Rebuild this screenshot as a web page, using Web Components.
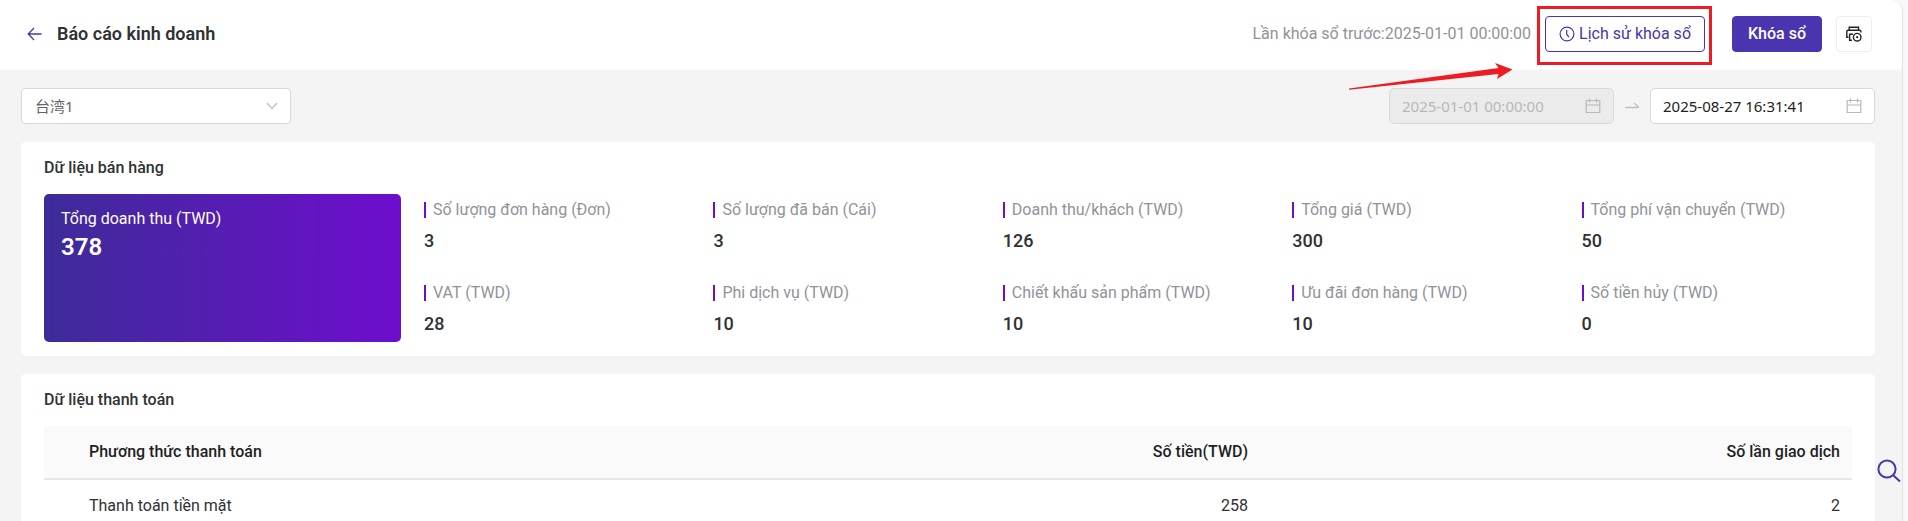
<!DOCTYPE html>
<html lang="vi">
<head>
<meta charset="utf-8">
<title>Báo cáo kinh doanh</title>
<style>
  html, body { height: 100%; }
  body { margin: 0; background: #f5f5f5; font: 16px/24px Roboto, "Noto Sans CJK SC", sans-serif; color: #303133; overflow: hidden; }
</style>
</head>
<body>
<report-page>
  <report-header slot="header" heading="Báo cáo kinh doanh" note="Lần khóa sổ trước:2025-01-01 00:00:00"></report-header>
  <report-filters slot="filters"></report-filters>
  <report-card heading="Dữ liệu bán hàng">
    <sales-summary>
      <total-tile slot="total" label="Tổng doanh thu (TWD)" value="378"></total-tile>
      <stat-item label="Số lượng đơn hàng (Đơn)" value="3"></stat-item>
      <stat-item label="Số lượng đã bán (Cái)" value="3"></stat-item>
      <stat-item label="Doanh thu/khách (TWD)" value="126"></stat-item>
      <stat-item label="Tổng giá (TWD)" value="300"></stat-item>
      <stat-item label="Tổng phí vận chuyển (TWD)" value="50"></stat-item>
      <stat-item label="VAT (TWD)" value="28"></stat-item>
      <stat-item label="Phi dịch vụ (TWD)" value="10"></stat-item>
      <stat-item label="Chiết khấu sản phẩm (TWD)" value="10"></stat-item>
      <stat-item label="Ưu đãi đơn hàng (TWD)" value="10"></stat-item>
      <stat-item label="Số tiền hủy (TWD)" value="0"></stat-item>
    </sales-summary>
  </report-card>
  <report-card heading="Dữ liệu thanh toán">
    <payment-table></payment-table>
  </report-card>
</report-page>

<script>
  const define = (name, render) => customElements.define(name, class extends HTMLElement {
    connectedCallback() {
      if (this.shadowRoot) return;
      this.attachShadow({ mode: 'open' });
      const template = document.createElement('template');
      template.innerHTML = render(this);
      this.shadowRoot.append(template.content.cloneNode(true));
    }
  });
  const attr = (el, name) => el.getAttribute(name) || '';

  define('report-page', () => `
    <style>
      :host { display: block; position: relative; height: 100vh; box-sizing: border-box; padding-right: 5px; background: #f8f8f8; }
      .shell { height: 100%; box-sizing: border-box; overflow: hidden; background: #f4f4f4; border-right: 1px solid #e2e2e2; border-radius: 0 12px 0 0; }
      main { display: flex; flex-direction: column; gap: 18px; padding: 18px 27px 18px 21px; }
      .search { position: absolute; right: 7px; bottom: 38px; padding: 0; border: 0; background: none; color: #4b34b0; line-height: 0; }
    </style>
    <div class="shell">
      <slot name="header"></slot>
      <main><slot name="filters"></slot><slot></slot></main>
    </div>
    <button class="search" aria-label="Tìm kiếm">
      <svg width="24" height="24" viewBox="0 0 24 24" fill="none" stroke="currentColor" stroke-width="2"><circle cx="10" cy="10" r="8.6"/><path d="M16 16l7 6.600"/></svg>
    </button>`);

  define('report-header', el => `
    <style>
      :host { display: block; background: #fff; border-radius: 0 0 4px 0; }
      header { display: flex; align-items: center; padding: 16px 30px 18px 27px; }
      .back { display: block; line-height: 0; color: #4b34b0; margin-right: 15px; }
      h1 { margin: 0; font-size: 18px; line-height: 24px; font-weight: 600; flex: 1; }
      .note { color: #909399; margin-right: 14px; }
      annotated-box { margin-right: 27px; }
      action-button + action-button { margin-left: 14px; }
    </style>
    <header>
      <a class="back" href="#" aria-label="Quay lại"><svg width="15" height="14" viewBox="0 0 15 14" fill="none" stroke="currentColor" stroke-width="1.300"><path d="M14.500 7H1.500M7 1L1.200 7L7 13"/></svg></a>
      <h1>${attr(el, 'heading')}</h1>
      <span class="note">${attr(el, 'note')}</span>
      <annotated-box>
        <action-button kind="outline"><svg width="16" height="16" viewBox="0 0 16 16" fill="none" stroke="currentColor" stroke-width="1.200"><circle cx="8" cy="8" r="6.900"/><path d="M7.700 4v4.400l2.300 2.600"/></svg>Lịch sử khóa sổ</action-button>
      </annotated-box>
      <action-button kind="primary">Khóa sổ</action-button>
      <action-button kind="icon" label="In"><svg width="18" height="18" viewBox="0 0 18 18" fill="none" stroke="#222" stroke-width="1.400"><path d="M4.200 5V2.200h9.300V5M3.400 12.200H1.800V6.500Q1.800 5.200 3.200 5.200H14.500Q15.900 5.200 15.900 6.500V7.500M8 9.200H4.600V15.200H7"/><circle cx="12.200" cy="12.200" r="3.800"/><circle cx="12.200" cy="12.200" r="1.100" fill="#222" stroke="none"/></svg></action-button>
    </header>`);

  define('annotated-box', () => `
    <style>
      :host { display: block; position: relative; }
      .frame { position: absolute; inset: -10px -7px -13px -8px; border: 3px solid #ed1c24; pointer-events: none; }
      svg { position: absolute; left: -196px; top: 46px; z-index: 1; pointer-events: none; }
    </style>
    <slot></slot><div class="frame"></div>
    <svg width="164" height="30" viewBox="0 0 164 30" fill="#ed1c24"><path d="M0 26.500L149.500 6L146 1L163.500 7.500L148 17L149.500 12L0 27.800Z"/></svg>`);

  define('action-button', el => `
    <style>
      :host { display: block; }
      button { display: flex; align-items: center; gap: 4px; height: 36px; box-sizing: border-box; border: 1px solid #4b34b0; border-radius: 4px; padding: 0 13px; font: inherit; white-space: nowrap; }
      .outline { background: #fff; color: #4b34b0; }
      .primary { background: #4b34b0; color: #fff; padding: 0 15px; font-weight: 500; }
      .icon { background: #fff; border-color: #eee; padding: 0 8px; }
    </style>
    <button class="${attr(el, 'kind')}" ${el.hasAttribute('label') ? `aria-label="${attr(el, 'label')}"` : ''}><slot></slot></button>`);

  define('report-filters', () => `
    <style>
      :host { display: flex; align-items: center; justify-content: space-between; }
      .store { position: relative; width: 270px; }
      select { appearance: none; width: 100%; height: 36px; box-sizing: border-box; border: 1px solid #d9d9d9; border-radius: 4px; background: #fff; padding: 0 13px; font: 15px/24px "Noto Sans", "Noto Sans CJK SC", sans-serif; color: #606266; }
      .store svg { position: absolute; right: 13px; top: 14px; pointer-events: none; }
      .range { display: flex; align-items: center; }
      .range > svg { margin: 0 11px; }
    </style>
    <div class="store">
      <select aria-label="Cửa hàng"><option>台湾1</option></select>
      <svg width="12" height="8" viewBox="0 0 12 8" fill="none" stroke="#bfbfbf" stroke-width="1.200"><path d="M1 1l5 5.500L11 1"/></svg>
    </div>
    <div class="range">
      <date-field label="Từ" value="2025-01-01 00:00:00" disabled></date-field>
      <svg width="14" height="10" viewBox="0 0 14 10" fill="none" stroke="#bfbfbf" stroke-width="1.300"><path d="M0 6.500H14L9 2"/></svg>
      <date-field label="Đến" value="2025-08-27 16:31:41"></date-field>
    </div>`);

  define('date-field', el => `
    <style>
      :host { display: block; position: relative; width: 225px; }
      input { width: 100%; height: 36px; box-sizing: border-box; border: 1px solid #d9d9d9; border-radius: 5px; background: #fff; padding: 0 40px 0 12px; font: 15px/24px "Noto Sans", sans-serif; color: #222; }
      input:disabled { background: #ebebeb; color: #b8b8b8; }
      svg { position: absolute; right: 13px; top: 10px; pointer-events: none; }
    </style>
    <input type="text" aria-label="${attr(el, 'label')}" value="${attr(el, 'value')}" ${el.hasAttribute('disabled') ? 'disabled' : ''}>
    <svg width="16" height="16" viewBox="0 0 16 16" fill="none" stroke="#b8b8b8" stroke-width="1.200"><path d="M1.200 2.500H14.800V14.500H1.200ZM1.200 7H14.800M4.500 .500V4.500M11.500 .500V4.500"/></svg>`);

  define('report-card', el => `
    <style>
      :host { display: block; background: #fff; border-radius: 5px; padding: 14px 23px; }
      h2 { margin: 0 0 14px; font-size: 16px; line-height: 24px; font-weight: 500; }
    </style>
    <h2>${attr(el, 'heading')}</h2><slot></slot>`);

  define('sales-summary', () => `
    <style>
      :host { display: flex; gap: 23px; }
      ::slotted([slot=total]) { flex: 0 0 357px; }
      .grid { flex: 1; display: grid; grid-template-columns: repeat(5, 1fr); align-content: start; gap: 21px 19px; }
    </style>
    <slot name="total"></slot><div class="grid"><slot></slot></div>`);

  define('total-tile', el => `
    <style>
      :host { display: block; box-sizing: border-box; min-height: 148px; padding: 13px 17px; border-radius: 5px; background: linear-gradient(90deg, #3d2c98, #6f0dce); color: #fff; }
      strong { display: block; font-size: 24px; line-height: 32px; font-weight: 600; }
    </style>
    ${attr(el, 'label')}<strong>${attr(el, 'value')}</strong>`);

  define('stat-item', el => `
    <style>
      :host { display: block; white-space: nowrap; }
      .label { display: flex; align-items: center; gap: 7px; height: 32px; color: #909399; }
      .label::before { content: ""; width: 2px; height: 16px; background: #6f0dce; }
      .value { font-size: 18px; line-height: 30px; font-weight: 500; }
    </style>
    <div class="label">${attr(el, 'label')}</div><div class="value">${attr(el, 'value')}</div>`);

  define('payment-table', () => `
    <style>
      :host { display: block; }
      table { width: 100%; border-collapse: separate; border-spacing: 0; table-layout: fixed; }
      th, td { padding: 14px 12px 14px 45px; text-align: right; }
      th { background: #fafafa; color: #1f1f1f; font-weight: 500; border-bottom: 2px solid #e8e8e8; }
      th:first-child, td:first-child { text-align: left; }
      .count { width: 592px; }
    </style>
    <table>
      <colgroup><col><col><col class="count"></colgroup>
      <thead><tr><th>Phương thức thanh toán</th><th>Số tiền(TWD)</th><th>Số lần giao dịch</th></tr></thead>
      <tbody><tr><td>Thanh toán tiền mặt</td><td>258</td><td>2</td></tr></tbody>
    </table>`);
</script>
</body>
</html>
